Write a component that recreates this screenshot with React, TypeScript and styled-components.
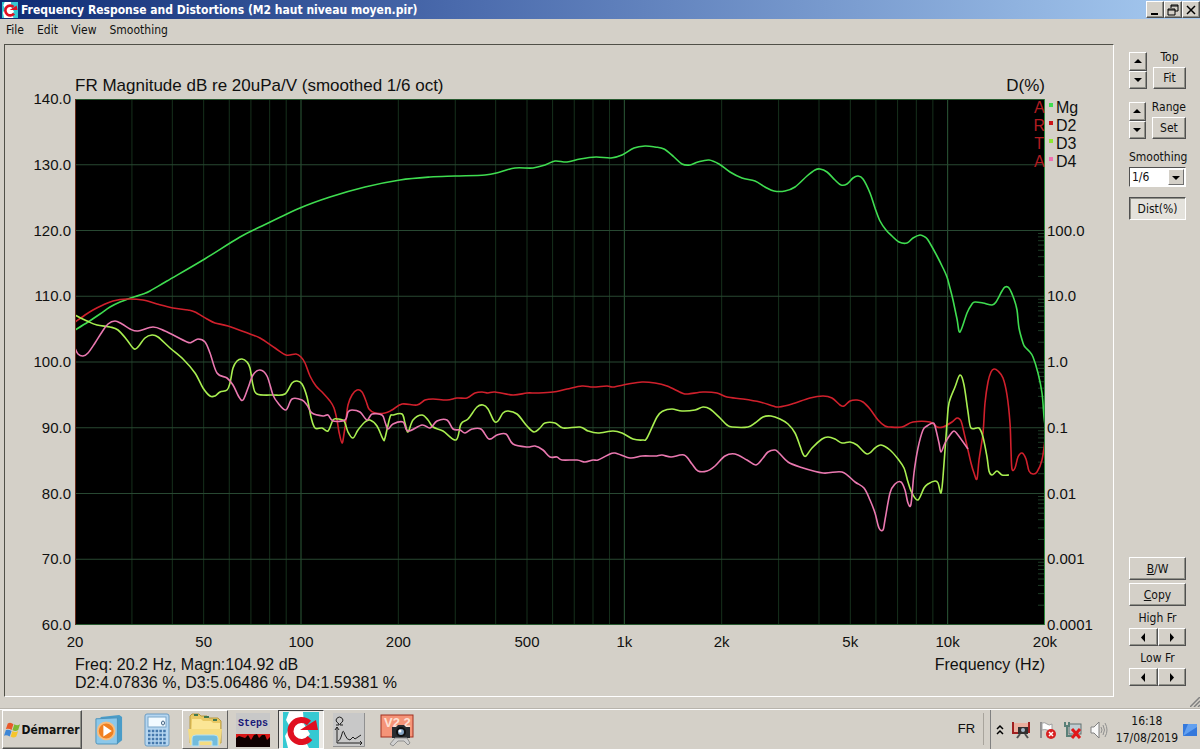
import { createGlobalStyle, styled } from "styled-components";

const PLOT = { x: 75, y: 99, width: 970, height: 526 };

const magnitude = "75,330 88,322 100,314 110,307 120,302 128,299 143,294 150,291 167,281 203,260 240,237 262,226 300,208 330,197 365,187 400,180 430,177 455,176 485,175 500,172 515,168 533,168 545,165 555,161 567,162 580,159 596,157 611,158 622,155 634,148 645,146 655,147 664,149 674,157 682,164 690,165 698,162 709,160 719,164 730,172 742,178 755,181 765,187 774,191 785,191 795,187 807,176 815,170 820,169 827,172 835,180 841,185 847,184 853,178 858,176 863,179 870,193 875,208 880,221 886,230 892,236 899,242 907,243 913,238 920,235 925,237 928,240 937,256 943,268 947,277 950,288 953,300 957,319 960,332 967,313 972,304 975,302 983,303 992,305 996,302 1002,291 1005,287 1009,288 1014,299 1017,310 1019,328 1023,343 1025,347 1029,351 1033,357 1038,373 1042,393 1044,417 1045,425";

const secondHarmonic = "75,322 85,315 93,310 103,305 113,301 127,299 143,300 157,304 173,308 188,310 195,312 207,319 215,323 228,326 250,334 260,338 275,348 286,355 296,354 301,357 305,363 310,376 316,386 323,393 330,401 334,408 337,420 339,432 342,443 344,434 346,420 348,405 352,395 357,390 362,392 366,401 369,409 375,413 385,413 392,410 402,404 417,405 425,400 433,399 447,400 457,398 467,398 475,393 482,392 488,393 495,392 513,395 527,393 537,393 553,392 567,389 582,386 593,387 607,386 613,387 628,384 642,382 655,383 667,386 682,393 688,394 703,392 717,393 727,397 743,399 760,402 773,406 779,407 792,404 810,398 823,396 832,398 840,405 844,406 850,401 857,400 863,402 870,409 878,420 885,426 890,427 902,427 913,422 930,422 937,427 943,427 952,422 957,418 961,421 965,437 971,463 974,473 977,479 979,460 983,433 985,403 988,382 991,372 994,369 998,371 1003,378 1007,395 1010,423 1011,450 1012,469 1015,468 1018,457 1022,453 1026,459 1029,471 1033,474 1037,472 1042,460 1045,440";

const thirdHarmonic = "75,315 87,321 97,325 110,327 118,330 127,340 133,348 137,348 145,338 152,335 158,337 170,348 183,359 195,373 203,388 210,396 215,396 220,392 227,390 230,383 233,368 237,361 242,359 247,362 250,368 253,385 257,394 273,395 285,394 292,383 297,381 302,384 307,397 311,417 315,428 322,428 328,431 333,420 337,419 344,421 348,432 353,438 358,430 365,422 370,420 377,426 383,439 385,438 390,417 393,415 402,414 405,423 408,432 413,420 422,415 428,420 433,427 443,431 456,440 461,424 468,419 477,407 483,405 488,409 494,421 498,421 503,413 508,411 517,414 527,426 534,432 540,428 545,423 555,423 563,428 580,427 588,431 598,433 613,431 622,433 633,439 643,440 647,438 657,417 663,411 672,409 682,411 695,410 703,407 710,409 720,418 727,425 732,427 748,427 755,423 763,417 771,416 780,419 788,424 795,433 800,446 803,454 806,456 812,448 822,439 828,437 835,439 842,443 850,442 857,445 867,454 875,448 881,445 890,450 898,459 904,468 908,482 912,493 918,500 924,488 928,484 935,481 938,483 941,493 943,477 947,423 949,403 955,387 960,375 964,385 968,412 971,428 979,428 983,437 987,457 989,471 992,475 997,471 1002,475 1009,475";

const fourthHarmonic = "75,348 78,354 83,356 88,353 95,343 102,332 108,324 115,321 122,324 130,329 138,331 153,327 165,331 187,342 192,342 198,339 205,342 210,353 217,373 227,378 233,385 239,397 243,400 248,388 253,375 260,370 267,376 273,395 278,403 286,410 292,399 302,400 307,405 312,413 323,416 328,415 333,421 345,420 348,412 352,410 360,412 367,420 372,414 382,415 385,422 388,429 393,424 403,422 408,431 422,425 430,428 437,421 447,420 453,429 460,430 465,433 472,429 481,429 489,439 497,435 506,434 513,444 527,447 535,446 543,450 550,457 557,457 562,460 577,460 585,462 593,460 598,460 608,455 615,453 630,458 642,456 655,456 662,455 671,457 684,455 692,464 698,471 707,471 715,466 725,456 735,454 747,460 756,465 763,458 768,452 775,450 779,453 788,462 800,467 823,473 842,472 855,482 864,488 870,500 875,513 879,528 883,530 885,520 890,493 895,484 901,482 905,490 908,503 911,504 914,473 918,448 923,430 927,426 933,423 935,426 939,443 941,452 945,443 950,435 954,431 958,435 968,449";

const curves = [
  { color: "#3fdc50", points: magnitude },
  { color: "#d0202c", points: secondHarmonic },
  { color: "#a8ee50", points: thirdHarmonic },
  { color: "#ea78b0", points: fourthHarmonic },
];

const legend = [
  { text: "Mg", color: "#3fdc50" },
  { text: "D2", color: "#cc1418" },
  { text: "D3", color: "#8ce830" },
  { text: "D4", color: "#f070b0" },
];

const magnitudeLabels = ["140.0", "130.0", "120.0", "110.0", "100.0", "90.0", "80.0", "70.0", "60.0"];
const distortionLabels = ["100.0", "10.0", "1.0", "0.1", "0.01", "0.001", "0.0001"];

const frequencies = [
  { text: "20", value: 20 },
  { text: "50", value: 50 },
  { text: "100", value: 100 },
  { text: "200", value: 200 },
  { text: "500", value: 500 },
  { text: "1k", value: 1000 },
  { text: "2k", value: 2000 },
  { text: "5k", value: 5000 },
  { text: "10k", value: 10000 },
  { text: "20k", value: 20000 },
];

const freqToX = (hz: number) => PLOT.x + (Math.log10(hz / 20) / 3) * PLOT.width;

// Catmull-Rom through the measured points
const toPath = (points: string) => {
  const p = points.split(" ").map((pair) => pair.split(",").map(Number));
  let d = `M${p[0][0]} ${p[0][1]}`;
  for (let i = 0; i < p.length - 1; i++) {
    const a = p[i - 1] ?? p[i];
    const b = p[i];
    const c = p[i + 1];
    const e = p[i + 2] ?? c;
    d += `C${b[0] + (c[0] - a[0]) / 6} ${b[1] + (c[1] - a[1]) / 6} ${c[0] - (e[0] - b[0]) / 6} ${c[1] - (e[1] - b[1]) / 6} ${c[0]} ${c[1]}`;
  }
  return d;
};

const Plot = () => {
  const right = PLOT.x + PLOT.width;
  const bottom = PLOT.y + PLOT.height;
  const step = PLOT.height / 8;
  const columns: number[] = [];
  [10, 100, 1000, 10000].forEach((decade) => {
    for (let n = 1; n < 10; n++) {
      const hz = decade * n;
      if (hz > 20 && hz < 20000) columns.push(hz);
    }
  });
  const ticks: number[] = [];
  for (let row = 2; row < 8; row++) {
    for (let n = 2; n < 10; n++) {
      ticks.push(PLOT.y + step * (row + 1 - Math.log10(n)));
    }
  }
  return (
    <PlotSvg viewBox={`${PLOT.x} ${PLOT.y} ${PLOT.width} ${PLOT.height}`} preserveAspectRatio="none">
      <rect x={PLOT.x} y={PLOT.y} width={PLOT.width} height={PLOT.height} fill="#000" />
      {columns.map((hz) => (
        <line
          key={hz}
          x1={freqToX(hz)}
          x2={freqToX(hz)}
          y1={PLOT.y}
          y2={bottom}
          stroke={[100, 1000, 10000].includes(hz) ? "#2c5a38" : "#16301c"}
        />
      ))}
      {[1, 2, 3, 4, 5, 6, 7].map((row) => (
        <line
          key={row}
          x1={PLOT.x}
          x2={right}
          y1={PLOT.y + row * step}
          y2={PLOT.y + row * step}
          stroke="#284832"
        />
      ))}
      {ticks.map((y) => (
        <line key={y} x1={right - 7} x2={right} y1={y} y2={y} stroke="#1e3c26" />
      ))}
      {curves.map((curve) => (
        <path key={curve.color} d={toPath(curve.points)} fill="none" stroke={curve.color} strokeWidth="1.6" />
      ))}
      <path d={`M${PLOT.x} ${PLOT.y + 0.5}H${right}M${PLOT.x} ${bottom - 0.5}H${right}`} stroke="#285a30" />
      <path d={`M${PLOT.x + 0.5} ${PLOT.y}V${bottom}`} stroke="#6a2a18" />
      <path d={`M${right - 0.5} ${PLOT.y}V${bottom}`} stroke="#2c8a3c" />
    </PlotSvg>
  );
};

const Arrow = ({ to }: { to: "up" | "down" | "left" | "right" }) => {
  const shapes = {
    up: "M1 6H9L5 2Z",
    down: "M1 3H9L5 7Z",
    left: "M7 0V9L3 4.500Z",
    right: "M3 0V9L7 4.500Z",
  };
  return (
    <svg width="10" height="9" viewBox="0 0 10 9">
      <path d={shapes[to]} fill="#000" />
    </svg>
  );
};

const ArtaIcon = ({ size }: { size: number }) => (
  <svg width={size} height={size} viewBox="0 0 36 36">
    <rect width="36" height="36" fill="#fff" />
    <path d="M0 0H6L3 8L7 15L2 24L5 36H0ZM20 0H36V36H26L22 28L27 22L21 12Z" fill="#35c9d2" />
    <path d="M26 11A11 11 0 1 0 27 26" fill="none" stroke="#e01020" strokeWidth="6" />
    <path d="M17 18H35L33 8L28 11Z" fill="#e01020" />
  </svg>
);

const StartIcon = () => (
  <svg width="17" height="18" viewBox="0 0 18 18">
    <path d="M4 2Q7 0 10 3L8 9Q5 7 2 8Z" fill="#e8592a" />
    <path d="M11 3Q14 5 17 3L15 9Q12 11 9 9Z" fill="#7db832" />
    <path d="M2 9Q5 8 8 10L6 16Q3 14 0 15Z" fill="#3d86d6" />
    <path d="M9 10Q12 12 15 10L13 16Q10 18 7 16Z" fill="#f6c52c" />
  </svg>
);

const PlayerIcon = () => (
  <svg width="28" height="30" viewBox="0 0 30 32">
    <path d="M6 2L26 0L29 2V27L24 31H6Z" fill="#4a9cc8" />
    <path d="M1 4L24 3V31H3Q1 31 1 29Z" fill="#8cc8ea" stroke="#4a90b8" />
    <circle cx="12" cy="17" r="9" fill="#f08020" stroke="#f6bd80" strokeWidth="2" />
    <path d="M9 11L18 17L9 23Z" fill="#fff" />
  </svg>
);

const CalculatorIcon = () => (
  <svg width="26" height="34" viewBox="0 0 26 34">
    <rect x="1" y="1" width="24" height="32" rx="2" fill="#b6d6f0" stroke="#6a9cc4" />
    <rect x="4" y="4" width="18" height="10" fill="#f2faff" stroke="#7ba6c8" />
    <ellipse cx="19" cy="10" rx="1.500" ry="2" fill="none" stroke="#406080" />
    <path d="M4 18H22M4 22H22M4 26H22M4 30H22" stroke="#4478ac" strokeWidth="2.500" strokeDasharray="2.500 1.300" />
  </svg>
);

const FolderIcon = () => (
  <svg width="36" height="34" viewBox="0 0 36 34">
    <path d="M3 3L5 1H12L14 3H20L22 5H31L34 8V30H3Z" fill="#e8c864" stroke="#b89a40" />
    <path d="M7 2H11M17 4H22M26 7H30" stroke="#407850" strokeWidth="2" />
    <path d="M5 6H14L16 8H24L26 10H33V28H4Z" fill="#fbe696" />
    <path d="M1 16H35L33 32H3Z" fill="#f5dc80" />
    <path d="M5 33V25Q5 22 9 22H27Q31 22 31 25V33H25V28H12V33Z" fill="#72bcdc" stroke="#b8e2f2" />
  </svg>
);

const WaveIcon = () => (
  <svg width="34" height="13" viewBox="0 0 34 13">
    <path d="M0 0H34V13H0Z" fill="#100000" />
    <path d="M0 0H34V3L31 6L29 1L26 1L23 4L21 0L18 1L15 6L12 1L9 4L6 3L3 2L0 4Z" fill="#d81818" />
  </svg>
);

const ImpedanceIcon = () => (
  <svg width="32" height="34" viewBox="0 0 32 34">
    <rect width="32" height="34" fill="#c8c8c8" />
    <path d="M0 33.500H31.500V0" fill="none" stroke="#909090" />
    <path d="M3 12H6V11Q3 9 3 7Q4 4 6.500 4Q9 4 10 7Q10 9 7 11V12H10" fill="none" stroke="#202020" />
    <path
      d="M4 14V30H29M2 17L4 14L6 17M27 28L29 30L27 32M5 28Q7 28 9 21Q10 15 12 22Q14 27 17 27L20 24L22 26L28 22"
      fill="none"
      stroke="#202020"
    />
  </svg>
);

const CaptureIcon = () => (
  <svg width="34" height="34" viewBox="0 0 34 34">
    <rect x="1" y="2" width="32" height="22" fill="#f59478" stroke="#a03020" />
    <text x="4" y="14" fill="#fde0d4" fontFamily="Liberation Sans" fontSize="13" fontWeight="bold">
      V2.2
    </text>
    <path d="M12 14H16L18 12H24L26 14H30V25H12Z" fill="#282c30" />
    <circle cx="21" cy="19" r="4" fill="#88a8c8" stroke="#101010" strokeWidth="2" />
    <circle cx="20" cy="18" r="1.500" fill="#fff" />
    <path d="M15 25H27L30 30L28 32L24 28H18L13 33L10 31Z" fill="#d0d0d0" stroke="#909090" />
  </svg>
);

const TrayIcons = () => (
  <>
    <svg width="18" height="18" viewBox="0 0 18 18">
      <rect x="1" y="2" width="16" height="10" fill="#eab0a0" />
      <path d="M1 1V12H6M17 1V12" fill="none" stroke="#a02020" strokeWidth="2" />
      <rect x="6" y="6" width="10" height="7" fill="#303030" />
      <circle cx="11" cy="9" r="2" fill="#a8b8c8" />
      <path d="M8 13L5 17M13 13L16 17" stroke="#505050" strokeWidth="2" />
    </svg>
    <svg width="18" height="18" viewBox="0 0 18 18">
      <path d="M3 1V17" stroke="#909090" strokeWidth="2" />
      <path d="M4 2Q7 1 9 3T14 3V9Q11 10 9 9T4 9Z" fill="#fff" stroke="#a0a0a0" />
      <circle cx="13" cy="13" r="5" fill="#d82020" />
      <path d="M11 11L15 15M15 11L11 15" stroke="#fff" strokeWidth="1.500" />
    </svg>
    <svg width="18" height="18" viewBox="0 0 18 18">
      <rect x="5" y="3" width="12" height="10" fill="#c0ccd0" stroke="#607070" />
      <path d="M3 5V15H8M1 1V5H5V1" fill="none" stroke="#5a8078" strokeWidth="2" />
      <path d="M8 8L16 17M16 8L8 17" stroke="#e01818" strokeWidth="3" />
    </svg>
    <svg width="18" height="18" viewBox="0 0 18 18">
      <path d="M1 6H4L9 1V17L4 12H1Z" fill="#f8f8f8" stroke="#808080" />
      <path d="M11 6Q13 9 11 12M13 4Q16 9 13 14M15 2Q19 9 15 16" fill="none" stroke="#909090" />
    </svg>
  </>
);

const App = () => (
  <Window>
    <GlobalStyle />
    <TitleBar>
      <ArtaIcon size={16} />
      <Title>Frequency Response and Distortions (M2 haut niveau moyen.pir)</Title>
      <Caption aria-label="Minimize">
        <svg width="12" height="12" viewBox="0 0 12 12">
          <path d="M2 10H9" stroke="#000" strokeWidth="2" />
        </svg>
      </Caption>
      <Caption aria-label="Restore">
        <svg width="12" height="12" viewBox="0 0 12 12">
          <path d="M4 4V1H11V7H8M4 2H11M1 5H8V11H1ZM1 6H8" fill="none" stroke="#000" />
        </svg>
      </Caption>
      <Caption aria-label="Close">
        <svg width="12" height="12" viewBox="0 0 12 12">
          <path d="M2 2L10 10M10 2L2 10" stroke="#000" strokeWidth="1.500" />
        </svg>
      </Caption>
    </TitleBar>
    <Menu>
      {["File", "Edit", "View", "Smoothing"].map((item) => (
        <MenuItem key={item}>{item}</MenuItem>
      ))}
    </Menu>
    <Main>
      <ChartPanel>
        <ChartHeader>
          <span>FR Magnitude dB re 20uPa/V (smoothed 1/6 oct)</span>
          <span>D(%)</span>
        </ChartHeader>
        <LeftAxis>
          {magnitudeLabels.map((label) => (
            <span key={label}>{label}</span>
          ))}
        </LeftAxis>
        <PlotArea>
          <Plot />
          <Brand>
            {["A", "R", "T", "A"].map((letter, i) => (
              <span key={i}>{letter}</span>
            ))}
          </Brand>
        </PlotArea>
        <RightColumn>
          <Legend>
            {legend.map((entry) => (
              <LegendItem key={entry.text}>
                <Marker $color={entry.color} />
                {entry.text}
              </LegendItem>
            ))}
          </Legend>
          <RightAxis>
            {distortionLabels.map((label) => (
              <span key={label}>{label}</span>
            ))}
          </RightAxis>
        </RightColumn>
        <FrequencyAxis>
          {frequencies.map((f, i) => (
            <FrequencyLabel
              key={f.text}
              $gap={i ? (Math.log10(f.value / frequencies[i - 1].value) / 3) * 100 : 0}
            >
              {f.text}
            </FrequencyLabel>
          ))}
        </FrequencyAxis>
        <ChartFooter>
          <div>
            <p>Freq: 20.2 Hz, Magn:104.92 dB</p>
            <p>D2:4.07836 %, D3:5.06486 %, D4:1.59381 %</p>
          </div>
          <p>Frequency (Hz)</p>
        </ChartFooter>
      </ChartPanel>
      <Sidebar>
        {[
          ["Top", "Fit"],
          ["Range", "Set"],
        ].map(([label, action]) => (
          <ScaleRow key={label}>
            <Spinner>
              <SpinButton aria-label={`${label} up`}>
                <Arrow to="up" />
              </SpinButton>
              <SpinButton aria-label={`${label} down`}>
                <Arrow to="down" />
              </SpinButton>
            </Spinner>
            <ScaleAction>
              <Label>{label}</Label>
              <Button>{action}</Button>
            </ScaleAction>
          </ScaleRow>
        ))}
        <SelectLabel htmlFor="smoothing">Smoothing</SelectLabel>
        <SelectBox>
          <Select id="smoothing" defaultValue="1/6">
            <option>1/6</option>
          </Select>
          <SelectArrow>
            <Arrow to="down" />
          </SelectArrow>
        </SelectBox>
        <Toggle aria-pressed="true">Dist(%)</Toggle>
        <BottomTools>
          <Button>
            <u>B</u>/W
          </Button>
          <Button>
            <u>C</u>opy
          </Button>
          {["High Fr", "Low Fr"].map((label) => (
            <ShiftGroup key={label}>
              <Label>{label}</Label>
              <ShiftRow>
                <ShiftButton aria-label={`${label} left`}>
                  <Arrow to="left" />
                </ShiftButton>
                <ShiftButton aria-label={`${label} right`}>
                  <Arrow to="right" />
                </ShiftButton>
              </ShiftRow>
            </ShiftGroup>
          ))}
        </BottomTools>
      </Sidebar>
    </Main>
    <StatusEdge>
      <svg width="10" height="10" viewBox="0 0 10 10">
        <path d="M0 10L10 0M4 10L10 4M8 10L10 8" stroke="#808080" strokeWidth="1.500" />
      </svg>
    </StatusEdge>
    <Taskbar>
      <StartButton>
        <StartIcon />
        Démarrer
      </StartButton>
      <Tasks>
        <Task aria-label="Media player">
          <PlayerIcon />
        </Task>
        <Task aria-label="Calculator">
          <CalculatorIcon />
        </Task>
        <Task aria-label="Explorer" $state="raised">
          <FolderIcon />
        </Task>
        <Task>
          <StepsIcon>
            Steps
            <WaveIcon />
          </StepsIcon>
        </Task>
        <Task aria-label="Arta" $state="active">
          <ArtaIcon size={36} />
        </Task>
        <Task aria-label="Limp">
          <ImpedanceIcon />
        </Task>
        <Task aria-label="Capture">
          <CaptureIcon />
        </Task>
      </Tasks>
      <Language>FR</Language>
      <Tray>
        <svg width="8" height="12" viewBox="0 0 8 12">
          <path d="M1 5L4 2L7 5M1 10L4 7L7 10" fill="none" stroke="#000" strokeWidth="1.500" />
        </svg>
        <TrayIcons />
        <Clock>
          <span>16:18</span>
          <span>17/08/2019</span>
        </Clock>
        <svg width="14" height="12" viewBox="0 0 14 12">
          <rect width="14" height="12" fill="#3478dc" />
          <path d="M0 12L14 3V0H5Z" fill="#62a0f0" />
        </svg>
      </Tray>
    </Taskbar>
  </Window>
);

const GlobalStyle = createGlobalStyle`
  * {
    box-sizing: border-box;
    margin: 0;
    padding: 0;
  }

  body {
    background-color: #d4d0c8;
    color: #101010;
    font-family: "DejaVu Sans Condensed", "DejaVu Sans", sans-serif;
    font-size: 12px;
  }

  button, select {
    font: inherit;
    color: inherit;
  }

  svg {
    display: block;
    flex-shrink: 0;
  }
`;

const Window = styled.div`
  height: 100vh;
  min-height: 600px;
  display: flex;
  flex-direction: column;
  overflow: hidden;
`;

const TitleBar = styled.header`
  height: 19px;
  padding-left: 2px;
  display: flex;
  align-items: center;
  flex-shrink: 0;
  background: linear-gradient(90deg, #0e2c74, #4a6aac 38%, #a6caf0);
`;

const Title = styled.h1`
  flex: 1;
  margin-left: 3px;
  font-size: 12px;
  font-weight: bold;
  color: #fff;
`;

const Button = styled.button`
  height: 23px;
  border: 1px solid;
  border-color: #fff #505050 #505050 #fff;
  background-color: #d4d0c8;
  box-shadow: inset -1px -1px #909088;
  display: flex;
  align-items: center;
  justify-content: center;
`;

const Caption = styled(Button)`
  width: 18px;
  height: 17px;
`;

const Menu = styled.nav`
  height: 25px;
  padding-left: 6px;
  display: flex;
  gap: 13px;
  flex-shrink: 0;
`;

const MenuItem = styled.button`
  height: 22px;
  border: none;
  background: none;
`;

const Main = styled.main`
  flex: 1;
  min-height: 0;
  padding-left: 4px;
  display: flex;
`;

const ChartPanel = styled.section`
  flex: 1;
  min-width: 0;
  display: grid;
  grid-template-columns: 70px 1fr 68px;
  grid-template-rows: 54px 1fr auto auto;
  border: 1px solid;
  border-color: #505048 #fff #fff #505048;
  font-family: "Liberation Sans", Arial, sans-serif;
  font-size: 16px;
  line-height: 18px;
`;

const ChartHeader = styled.div`
  grid-column: 2;
  padding-bottom: 4px;
  display: flex;
  align-items: flex-end;
  justify-content: space-between;
  font-size: 17px;
`;

const LeftAxis = styled.div`
  grid-column: 1;
  margin: -9px 0;
  padding-right: 4px;
  display: flex;
  flex-direction: column;
  align-items: flex-end;
  justify-content: space-between;
  font-size: 15px;
`;

const PlotArea = styled.div`
  position: relative;
  min-height: 0;
`;

const PlotSvg = styled.svg`
  width: 100%;
  height: 100%;
`;

const Brand = styled.div`
  position: absolute;
  top: 0;
  right: 0;
  display: flex;
  flex-direction: column;
  align-items: center;
  color: #b01c20;
`;

const RightColumn = styled.div`
  min-height: 0;
  display: flex;
  flex-direction: column;
`;

const Legend = styled.ul`
  height: 25%;
  list-style: none;
`;

const LegendItem = styled.li`
  padding-left: 4px;
  display: flex;
  gap: 3px;
`;

const Marker = styled.span<{ $color: string }>`
  width: 4px;
  height: 4px;
  margin-top: 4px;
  background-color: ${({ $color }) => $color};
`;

const RightAxis = styled.div`
  flex: 1;
  margin: -9px 0;
  padding-left: 2px;
  display: flex;
  flex-direction: column;
  justify-content: space-between;
  font-size: 15px;
`;

const FrequencyAxis = styled.div`
  grid-column: 2;
  padding-top: 8px;
  display: flex;
  font-size: 15px;
`;

const FrequencyLabel = styled.span<{ $gap: number }>`
  width: 0;
  margin-left: ${({ $gap }) => $gap}%;
  display: flex;
  justify-content: center;
`;

const ChartFooter = styled.footer`
  grid-column: 2;
  padding: 5px 0 4px;
  display: flex;
  justify-content: space-between;
`;

const Sidebar = styled.aside`
  width: 86px;
  padding: 8px 14px 11px 15px;
  display: flex;
  flex-direction: column;
  flex-shrink: 0;
`;

const ScaleRow = styled.div`
  height: 37px;
  margin-bottom: 13px;
  display: flex;
  gap: 6px;
`;

const Spinner = styled.div`
  width: 18px;
  display: flex;
  flex-direction: column;
`;

const SpinButton = styled(Button)`
  flex: 1;
  height: auto;
`;

const ScaleAction = styled.div`
  flex: 1;
  display: flex;
  flex-direction: column;
  justify-content: space-between;

  ${Button} {
    height: 22px;
  }
`;

const Label = styled.span`
  line-height: 10px;
  text-align: center;
  white-space: nowrap;
`;

const SelectLabel = styled.label`
  line-height: 10px;
`;

const SelectBox = styled.div`
  position: relative;
  margin: 5px 0 10px;
`;

const Select = styled.select`
  width: 100%;
  height: 20px;
  padding-left: 2px;
  appearance: none;
  border: 1px solid;
  border-color: #505050 #fff #fff #505050;
  border-radius: 0;
  background-color: #fff;
`;

const SelectArrow = styled.span`
  position: absolute;
  top: 2px;
  right: 2px;
  bottom: 2px;
  width: 16px;
  border: 1px solid;
  border-color: #fff #707070 #707070 #fff;
  background-color: #d4d0c8;
  display: flex;
  align-items: center;
  justify-content: center;
  pointer-events: none;
`;

const Toggle = styled(Button)`
  border-color: #505050 #fff #fff #505050;
  background-color: #e4e2dc;
  box-shadow: inset 1px 1px #909088;
`;

const BottomTools = styled.div`
  margin-top: auto;
  display: flex;
  flex-direction: column;
  gap: 3px;
`;

const ShiftGroup = styled.div`
  padding-top: 4px;
  display: flex;
  flex-direction: column;
  gap: 5px;
`;

const ShiftRow = styled.div`
  display: flex;
`;

const ShiftButton = styled(Button)`
  flex: 1;
  height: 18px;
`;

const StatusEdge = styled.div`
  height: 12px;
  display: flex;
  justify-content: flex-end;
  flex-shrink: 0;
  border-bottom: 1px solid #b8b4ac;
`;

const Taskbar = styled.footer`
  height: 40px;
  padding-left: 2px;
  display: flex;
  flex-shrink: 0;
  border-top: 1px solid #fff;
`;

const StartButton = styled(Button)`
  width: 80px;
  height: 39px;
  font-weight: bold;
`;

const Tasks = styled.div`
  flex: 1;
  margin-left: 4px;
  display: flex;
  gap: 2px;
`;

const Task = styled.button<{ $state?: "raised" | "active" }>`
  width: 46px;
  height: 39px;
  display: flex;
  align-items: center;
  justify-content: center;
  border: 1px solid;
  border-color: ${({ $state }) =>
    $state === "raised"
      ? "#fff #606060 #606060 #fff"
      : $state === "active"
        ? "#404040 #fff #fff #404040"
        : "transparent"};
  background-color: ${({ $state }) => ($state === "active" ? "#eceae6" : "transparent")};
`;

const StepsIcon = styled.span`
  width: 34px;
  height: 34px;
  display: flex;
  flex-direction: column;
  align-items: center;
  justify-content: space-between;
  background-color: #c8c8c8;
  color: #181878;
  font-family: "Liberation Mono", monospace;
  font-size: 10px;
  font-weight: bold;
  line-height: 21px;
`;

const Language = styled.span`
  width: 26px;
  height: 32px;
  margin: 3px 6px 0 0;
  border-right: 1px solid #a8a49c;
  font-family: "Liberation Sans", Arial, sans-serif;
  font-size: 13px;
  line-height: 32px;
`;

const Tray = styled.div`
  padding: 0 3px 0 5px;
  display: flex;
  align-items: center;
  gap: 8px;
  border-left: 1px solid #808080;
`;

const Clock = styled.time`
  margin-right: -3px;
  display: flex;
  flex-direction: column;
  align-items: center;
  line-height: 17px;
`;

export default App;
